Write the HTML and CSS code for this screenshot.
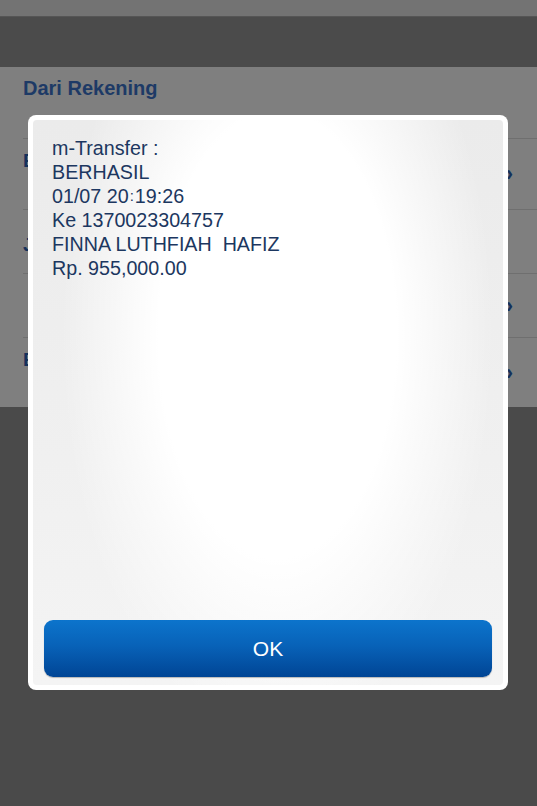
FILE: index.html
```html
<!DOCTYPE html>
<html>
<head>
<meta charset="utf-8">
<link rel="stylesheet" href="styles.css">
</head>
<body>
<div class="screen">
  <div class="status"></div>
  <div class="nav"></div>
  <div class="content">
    <div class="section-title">Dari Rekening</div>
    <div class="row r1"><span class="lbl">E</span><span class="chev">›</span></div>
    <div class="row r2"><span class="lbl">J</span></div>
    <div class="row r3"><span class="chev">›</span></div>
    <div class="row r4"><span class="lbl">E</span><span class="chev">›</span></div>
  </div>
  <div class="bottom"></div>
</div>
<div class="dialog">
  <div class="dialog-inner">
    <div class="msg">m-Transfer :<br>BERHASIL<br>01/07 20<span class="tcolon">:</span>19:26<br>Ke 1370023304757<br>FINNA LUTHFIAH&nbsp; HAFIZ<br>Rp. 955,000.00</div>
    <button class="ok">OK</button>
  </div>
</div>
</body>
</html>
```
FILE: styles.css
```css
html, body { margin: 0; padding: 0; }
body {
  width: 537px;
  height: 806px;
  overflow: hidden;
  font-family: "Liberation Sans", Arial, sans-serif;
  position: relative;
  background: #4a4a4a;
}
.screen { display: flex; flex-direction: column; height: 806px; }
.status { height: 16px; background: #737373; border-bottom: 1px solid #555; }
.nav { height: 50px; background: #4b4b4b; }
.content { background: #7f7f7f; height: 340px; display: flex; flex-direction: column; }
.section-title {
  height: 71px;
  box-sizing: border-box;
  padding: 10px 0 0 23px;
  font-size: 20px;
  font-weight: bold;
  color: #1d3a66;
}
.row {
  margin-left: 23px;
  border-top: 1px solid #6f6f6f;
  display: flex;
  justify-content: space-between;
  align-items: center;
  color: #14305a;
  font-size: 19px;
  font-weight: bold;
  padding-right: 24px;
}
.r1 { height: 70px; }
.r2 { height: 63px; }
.r3 { height: 63px; }
.r4 { height: 69px; }
.lbl { width: 10px; align-self: flex-start; margin-top: 11px; }
.r2 .lbl { margin-top: 24px; }
.chev { margin-left: auto; font-size: 22px; color: #14305a; }
.bottom { flex: 1; background: #4a4a4a; }

.dialog {
  position: absolute;
  left: 28px;
  top: 115px;
  width: 480px;
  height: 575px;
  background: #fff;
  border-radius: 8px;
  box-sizing: border-box;
  padding: 5px;
}
.dialog-inner {
  height: 100%;
  box-sizing: border-box;
  border-radius: 4px;
  background:
    radial-gradient(ellipse 46% 72% at 52% 38%, #ffffff 0%, #ffffff 55%, rgba(255,255,255,0) 100%),
    linear-gradient(180deg, #ebebeb 0%, #f0f0f0 60%, #f4f4f4 100%);
  display: flex;
  flex-direction: column;
  padding: 16px 11px 8px 19px;
}
.msg {
  flex: 1;
  font-size: 19.7px;
  line-height: 24px;
  color: #1c3760;
}
.tcolon { position: relative; top: -2px; font-size: 15px; line-height: 0; padding: 0 1px; }
.ok {
  height: 57px;
  width: 448px;
  margin-left: -8px;
  border: none;
  border-radius: 9px;
  background: linear-gradient(180deg, #0c74cc 0%, #0862b8 45%, #004595 100%);
  color: #fff;
  font-family: "Liberation Sans", Arial, sans-serif;
  font-size: 21px;
  box-shadow: 0 1px 1px rgba(0,0,0,0.25);
}
```
